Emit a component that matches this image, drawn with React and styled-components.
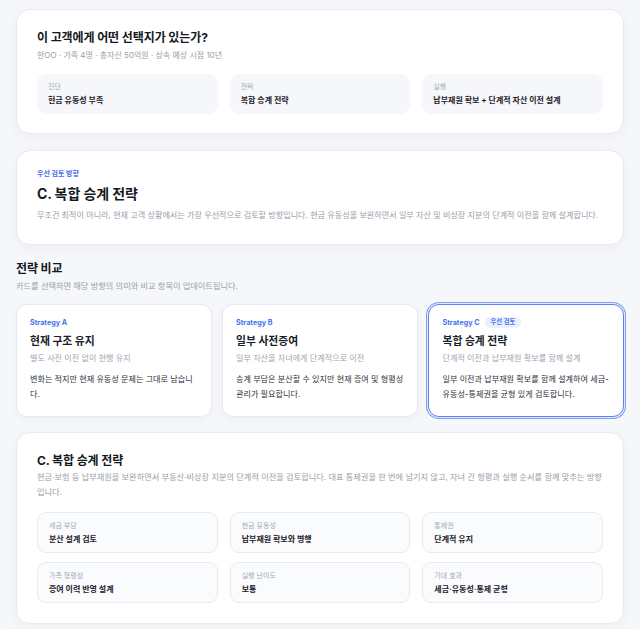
import React, { useState } from "react";
import styled, { createGlobalStyle, css } from "styled-components";

const GlobalStyle = createGlobalStyle`
  html, body {
    margin: 0;
    padding: 0;
    background: #f6f7fa;
  }
  body {
    font-family: Inter, "Noto Sans CJK KR", "Noto Sans", sans-serif;
    color: #1b1f27;
    -webkit-font-smoothing: antialiased;
  }
  * { box-sizing: border-box; }
`;

const Page = styled.div`
  width: 640px;
  height: 629px;
  overflow: hidden;
  padding: 9px 16px 0;
  display: flex;
  flex-direction: column;
`;

const Card = styled.section`
  background: #fff;
  border: 1px solid #e7eaf0;
  border-radius: 14px;
  box-shadow: 0 4px 14px rgba(30, 45, 80, 0.04);
  padding: ${({ $pad }) => $pad || "20px"};
  margin-bottom: ${({ $mb }) => $mb || "0"};
`;

const Title = styled.h1`
  margin: 0;
  font-size: ${({ $size }) => $size || "12px"};
  line-height: ${({ $lh }) => $lh || "16px"};
  font-weight: 700;
  color: #141821;
  letter-spacing: -0.1px;
`;

const Muted = styled.p`
  margin: ${({ $m }) => $m || "0"};
  font-size: ${({ $size }) => $size || "8px"};
  line-height: ${({ $lh }) => $lh || "12px"};
  color: #979eaa;
`;

const Eyebrow = styled.div`
  font-size: 7px;
  line-height: 10px;
  font-weight: 700;
  color: #3d6ef0;
  margin-bottom: 6px;
`;

const BoxGrid = styled.div`
  display: grid;
  grid-template-columns: repeat(3, 1fr);
  gap: ${({ $rowGap }) => $rowGap || "0"} 12px;
  margin-top: ${({ $mt }) => $mt || "13px"};
`;

const InfoBox = styled.div`
  height: ${({ $h }) => $h || "40px"};
  border-radius: 9px;
  padding: 8px 11px;
  display: flex;
  flex-direction: column;
  justify-content: center;
  gap: 3px;
  ${({ $outlined }) =>
    $outlined
      ? css`
          background: #fafbfd;
          border: 1px solid #e8ebf1;
        `
      : css`
          background: #f6f7fa;
        `}
`;

const BoxLabel = styled.span`
  font-size: 7px;
  line-height: 10px;
  color: #a3a9b4;
`;

const BoxValue = styled.span`
  font-size: 8px;
  line-height: 11px;
  font-weight: 700;
  color: #1d212a;
`;

const SectionHead = styled.div`
  margin: 16px 0 12px;
`;

const StrategyRow = styled.div`
  display: grid;
  grid-template-columns: repeat(3, 1fr);
  gap: 10px;
  margin-bottom: 15px;
`;

const StrategyCard = styled.button`
  all: unset;
  box-sizing: border-box;
  cursor: pointer;
  height: 113px;
  background: #fff;
  border-radius: 11px;
  padding: 13px 13px 12px;
  border: 1px solid #e6eaf1;
  box-shadow: 0 3px 10px rgba(30, 45, 80, 0.03);
  display: flex;
  flex-direction: column;
  ${({ $active }) =>
    $active &&
    css`
      border: 1.5px solid #5a83f1;
      padding: 12.5px 13.5px 11.5px;
      box-shadow: 0 0 0 1px #e3eafd, 0 0 0 2px #7e9df4;
    `}
`;

const TagLine = styled.div`
  display: flex;
  align-items: center;
  gap: 5px;
  height: 10px;
  margin-bottom: 7px;
`;

const Tag = styled.span`
  font-size: 7.2px;
  line-height: 10px;
  font-weight: 700;
  color: #4273f0;
`;

const Badge = styled.span`
  font-size: 6.3px;
  line-height: 11px;
  font-weight: 700;
  color: #4a74ee;
  background: #eaf0fe;
  border-radius: 8px;
  padding: 0 6px;
`;

const StrategyTitle = styled.div`
  font-size: 10.8px;
  line-height: 14px;
  font-weight: 700;
  color: #1a1e26;
  margin-bottom: 3px;
`;

const StrategySub = styled.div`
  font-size: 8.1px;
  line-height: 12px;
  color: #a0a6b1;
  margin-bottom: 8px;
`;

const StrategyBody = styled.div`
  font-size: 8.1px;
  line-height: 15px;
  color: #2c313a;
`;

const strategies = [
  {
    tag: "Strategy A",
    title: "현재 구조 유지",
    sub: "별도 사전 이전 없이 현행 유지",
    body: "변화는 적지만 현재 유동성 문제는 그대로 남습니다.",
  },
  {
    tag: "Strategy B",
    title: "일부 사전증여",
    sub: "일부 자산을 자녀에게 단계적으로 이전",
    body: "승계 부담은 분산할 수 있지만 현재 증여 및 형평성 관리가 필요합니다.",
  },
  {
    tag: "Strategy C",
    badge: "우선 검토",
    title: "복합 승계 전략",
    sub: "단계적 이전과 납부재원 확보를 함께 설계",
    body: "일부 이전과 납부재원 확보를 함께 설계하여 세금-유동성-통제권을 균형 있게 검토합니다.",
  },
];

const summary = [
  { label: "진단", value: "현금 유동성 부족" },
  { label: "전략", value: "복합 승계 전략" },
  { label: "실행", value: "납부재원 확보 + 단계적 자산 이전 설계" },
];

const details = [
  { label: "세금 부담", value: "분산 설계 검토" },
  { label: "현금 유동성", value: "납부재원 확보와 병행" },
  { label: "통제권", value: "단계적 유지" },
  { label: "가족 형평성", value: "증여 이력 반영 설계" },
  { label: "실행 난이도", value: "보통" },
  { label: "기대 효과", value: "세금·유동성·통제 균형" },
];

export default function App() {
  const [selected, setSelected] = useState(2);

  return (
    <>
      <GlobalStyle />
      <Page>
        <Card $pad="20px 20px 19px" $mb="16px">
          <Title>이 고객에게 어떤 선택지가 있는가?</Title>
          <Muted $m="3px 0 0">한OO · 가족 4명 · 총자산 50억원 · 상속 예상 시점 10년</Muted>
          <BoxGrid>
            {summary.map((s) => (
              <InfoBox key={s.label}>
                <BoxLabel>{s.label}</BoxLabel>
                <BoxValue>{s.value}</BoxValue>
              </InfoBox>
            ))}
          </BoxGrid>
        </Card>

        <Card $pad="18px 18px 23px 20px">
          <Eyebrow>우선 검토 방향</Eyebrow>
          <Title $size="14px" $lh="18px">C. 복합 승계 전략</Title>
          <Muted $size="8.1px" $m="6px 0 0">
            무조건 최적이 아니라, 현재 고객 상황에서는 가장 우선적으로 검토할 방향입니다. 현금 유동성을 보완하면서 일부 자산 및 비상장 지분의 단계적 이전을 함께 설계합니다.
          </Muted>
        </Card>

        <SectionHead>
          <Title $size="12px" $lh="15px">전략 비교</Title>
          <Muted $size="8.2px" $m="4px 0 0">카드를 선택하면 해당 방향의 의미와 비교 항목이 업데이트됩니다.</Muted>
        </SectionHead>

        <StrategyRow>
          {strategies.map((s, i) => (
            <StrategyCard key={s.tag} $active={selected === i} onClick={() => setSelected(i)}>
              <TagLine>
                <Tag>{s.tag}</Tag>
                {s.badge && <Badge>{s.badge}</Badge>}
              </TagLine>
              <StrategyTitle>{s.title}</StrategyTitle>
              <StrategySub>{s.sub}</StrategySub>
              <StrategyBody>{s.body}</StrategyBody>
            </StrategyCard>
          ))}
        </StrategyRow>

        <Card $pad="20px 20px 20px">
          <Title $size="12px">C. 복합 승계 전략</Title>
          <Muted $size="8.2px" $lh="15px" $m="1px 0 0">
            현금·보험 등 납부재원을 보완하면서 부동산·비상장 지분의 단계적 이전을 검토합니다. 대표 통제권을 한 번에 넘기지 않고, 자녀 간 형평과 실행 순서를 함께 맞추는 방향입니다.
          </Muted>
          <BoxGrid $rowGap="9px" $mt="12px">
            {details.map((d) => (
              <InfoBox key={d.label} $outlined $h="41px">
                <BoxLabel>{d.label}</BoxLabel>
                <BoxValue>{d.value}</BoxValue>
              </InfoBox>
            ))}
          </BoxGrid>
        </Card>
      </Page>
    </>
  );
}
